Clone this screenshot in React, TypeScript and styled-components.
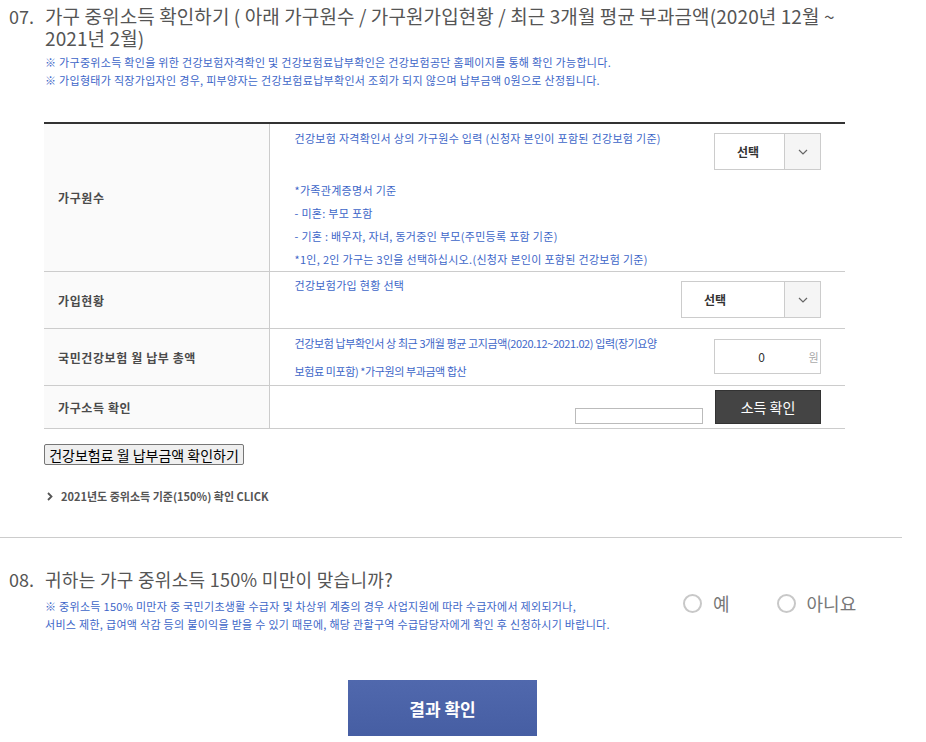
import React, { FC } from "react";
import styled, { createGlobalStyle } from "styled-components";

const GlobalStyle = createGlobalStyle`
  html, body {
    margin: 0;
    padding: 0;
    background: #fff;
  }
  body {
    font-family: "Noto Sans CJK KR", "Noto Sans", sans-serif;
    color: #555;
  }
  * {
    box-sizing: border-box;
  }
`;

const BLUE = "#3d66c8";

const Page = styled.div`
  width: 902px;
  padding-top: 5px;
`;

const Section = styled.section`
  padding-left: 9px;
`;

const Heading = styled.h2<{ $size: number; $spacing: number }>`
  display: grid;
  grid-template-columns: 36px 1fr;
  margin: 0;
  width: 830px;
  font-size: ${({ $size }) => $size}px;
  font-weight: 400;
  line-height: 22px;
  letter-spacing: ${({ $spacing }) => $spacing}px;
  color: #555;
`;

const Num = styled.span`
  font-size: 18px;
  letter-spacing: 0;
`;

const Notes = styled.div<{ $width?: number }>`
  margin: 4px 0 0 36px;
  width: ${({ $width }) => ($width ? `${$width}px` : "auto")};
  font-size: 11px;
  line-height: 18px;
  letter-spacing: 0.3px;
  color: ${BLUE};
`;

const Note = styled.p`
  margin: 0;
  white-space: nowrap;
`;

const Table = styled.table`
  margin: 33px 0 0 35px;
  width: 801px;
  border-collapse: collapse;
  border-top: 2px solid #333;
`;

const Row = styled.tr`
  border-bottom: 1px solid #ccc;
`;

const Label = styled.th<{ $h: number }>`
  width: 225px;
  height: ${({ $h }) => $h}px;
  padding: 0 0 0 14px;
  background: #fafafa;
  border-right: 1px solid #ccc;
  text-align: left;
  vertical-align: middle;
  font-size: 12px;
  font-weight: 700;
  color: #4a4a4a;
  letter-spacing: 0.6px;
`;

const Cell = styled.td`
  padding: 0 24px 0 25px;
  vertical-align: top;
  font-size: 11px;
  color: ${BLUE};
  letter-spacing: 0.3px;
`;

const CellTop = styled.div`
  display: flex;
  justify-content: space-between;
  align-items: flex-start;
`;

const CellText = styled.p<{ $pt?: number; $lh?: number; $ls?: number }>`
  margin: 0;
  padding-top: ${({ $pt = 0 }) => $pt}px;
  line-height: ${({ $lh = 23 }) => $lh}px;
  letter-spacing: ${({ $ls = 0.3 }) => $ls}px;
  white-space: nowrap;
`;

const DetailList = styled.div`
  margin-top: 9px;
  line-height: 23px;
`;

const SelectBox = styled.div<{ $w: number; $mt: number }>`
  display: flex;
  flex-shrink: 0;
  width: ${({ $w }) => $w}px;
  height: 37px;
  margin-top: ${({ $mt }) => $mt}px;
  border: 1px solid #ccc;
  background: #fff;
`;

const SelectValue = styled.span`
  flex: 1;
  padding-left: 22px;
  line-height: 35px;
  font-size: 12px;
  font-weight: 700;
  color: #333;
  letter-spacing: 0;
`;

const SelectArrow = styled.span`
  display: flex;
  align-items: center;
  justify-content: center;
  width: 36px;
  background: #f5f5f5;
  border-left: 1px solid #ccc;
`;

const AmountBox = styled.div`
  display: flex;
  flex-shrink: 0;
  width: 107px;
  height: 35px;
  margin-top: 10px;
  border: 1px solid #ccc;
  align-items: center;
`;

const AmountValue = styled.span`
  flex: 1;
  text-align: center;
  font-size: 12px;
  color: #333;
`;

const Unit = styled.span`
  padding-right: 1px;
  font-size: 11px;
  color: #aaa;
`;

const ConfirmCell = styled.div`
  display: flex;
  justify-content: flex-end;
  align-items: flex-end;
  gap: 12px;
  padding: 4px 0 4px;
`;

const SmallInput = styled.div`
  width: 128px;
  height: 16px;
  border: 1px solid #bbb;
`;

const DarkButton = styled.button`
  width: 106px;
  height: 34px;
  padding: 0;
  border: 1px solid #333;
  background: #444;
  color: #fff;
  font-family: inherit;
  font-size: 14px;
  letter-spacing: 0;
`;

const PlainButton = styled.button`
  display: block;
  margin: 15px 0 0 35px;
  width: 200px;
  height: 21px;
  padding: 0;
  border: 1px solid #767676;
  border-radius: 2px;
  background: #efefef;
  font-family: inherit;
  font-size: 14px;
  line-height: 18px;
  color: #000;
  letter-spacing: 0;
`;

const ClickLink = styled.a`
  display: flex;
  align-items: center;
  gap: 8px;
  margin: 22px 0 0 38px;
  line-height: 18px;
  font-size: 11px;
  font-weight: 700;
  color: #555;
  text-decoration: none;
  letter-spacing: 0;
`;

const Separator = styled.hr`
  margin: 32px 0 0;
  border: 0;
  border-top: 1px solid #ccc;
`;

const Section08 = styled(Section)`
  padding-top: 30px;
`;

const AnswerRow = styled.div`
  display: flex;
  align-items: flex-start;
  margin-top: 3px;
`;

const RadioGroup = styled.div`
  display: flex;
  gap: 47px;
  margin-top: -1px;
`;

const Radio = styled.label`
  display: flex;
  align-items: center;
  gap: 11px;
  font-size: 18px;
  line-height: 22px;
  color: #777;
`;

const Circle = styled.span`
  width: 19px;
  height: 19px;
  border: 2px solid #c8c8c8;
  border-radius: 50%;
`;

const ResultButton = styled.button`
  display: block;
  margin: 47px 0 0 339px;
  width: 189px;
  height: 56px;
  border: 0;
  background: linear-gradient(#5068ad, #465ea3);
  color: #fff;
  font-family: inherit;
  font-size: 17px;
  font-weight: 700;
`;

const Chevron: FC = () => (
  <svg width="10" height="6" viewBox="0 0 10 6">
    <path d="M1 1l4 4 4-4" fill="none" stroke="#666" strokeWidth="1.2" />
  </svg>
);

const Arrow: FC = () => (
  <svg width="6" height="9" viewBox="0 0 6 9">
    <path d="M1 1l3.5 3.5L1 8" fill="none" stroke="#555" strokeWidth="1.8" />
  </svg>
);

const Select: FC<{ width: number; mt: number }> = ({ width, mt }) => (
  <SelectBox $w={width} $mt={mt}>
    <SelectValue>선택</SelectValue>
    <SelectArrow>
      <Chevron />
    </SelectArrow>
  </SelectBox>
);

const App: FC = () => (
  <Page>
    <GlobalStyle />
    <Section>
      <Heading $size={19} $spacing={0.1}>
        <Num>07.</Num>
        <span>
          가구 중위소득 확인하기 ( 아래 가구원수 / 가구원가입현황 / 최근 3개월 평균 부과금액(2020년 12월 ~ 2021년 2월)
        </span>
      </Heading>
      <Notes>
        <Note>※ 가구중위소득 확인을 위한 건강보험자격확인 및 건강보험료납부확인은 건강보험공단 홈페이지를 통해 확인 가능합니다.</Note>
        <Note>※ 가입형태가 직장가입자인 경우, 피부양자는 건강보험료납부확인서 조회가 되지 않으며 납부금액 0원으로 산정됩니다.</Note>
      </Notes>

      <Table>
        <tbody>
          <Row>
            <Label $h={148}>가구원수</Label>
            <Cell>
              <CellTop>
                <CellText $pt={3}>건강보험 자격확인서 상의 가구원수 입력 (신청자 본인이 포함된 건강보험 기준)</CellText>
                <Select width={107} mt={9} />
              </CellTop>
              <DetailList>
                <div>*가족관계증명서 기준</div>
                <div>- 미혼: 부모 포함</div>
                <div>- 기혼 : 배우자, 자녀, 동거중인 부모(주민등록 포함 기준)</div>
                <div>*1인, 2인 가구는 3인을 선택하십시오.(신청자 본인이 포함된 건강보험 기준)</div>
              </DetailList>
            </Cell>
          </Row>
          <Row>
            <Label $h={57}>가입현황</Label>
            <Cell>
              <CellTop>
                <CellText $pt={2}>건강보험가입 현황 선택</CellText>
                <Select width={140} mt={9} />
              </CellTop>
            </Cell>
          </Row>
          <Row>
            <Label $h={56}>국민건강보험 월 납부 총액</Label>
            <Cell>
              <CellTop>
                <CellText $lh={28} $ls={-0.4}>
                  건강보험 납부확인서 상 최근 3개월 평균 고지금액(2020.12~2021.02) 입력(장기요양
                  <br />
                  보험료 미포함) *가구원의 부과금액 합산
                </CellText>
                <AmountBox>
                  <AmountValue>0</AmountValue>
                  <Unit>원</Unit>
                </AmountBox>
              </CellTop>
            </Cell>
          </Row>
          <Row>
            <Label $h={42}>가구소득 확인</Label>
            <Cell>
              <ConfirmCell>
                <SmallInput />
                <DarkButton>소득 확인</DarkButton>
              </ConfirmCell>
            </Cell>
          </Row>
        </tbody>
      </Table>

      <PlainButton>건강보험료 월 납부금액 확인하기</PlainButton>
      <ClickLink href="#">
        <Arrow />
        2021년도 중위소득 기준(150%) 확인 CLICK
      </ClickLink>
    </Section>

    <Separator />

    <Section08>
      <Heading $size={18} $spacing={0.3}>
        <Num>08.</Num>
        <span>귀하는 가구 중위소득 150% 미만이 맞습니까?</span>
      </Heading>
      <AnswerRow>
        <Notes $width={638}>
          <Note>※ 중위소득 150% 미만자 중 국민기초생활 수급자 및 차상위 계층의 경우 사업지원에 따라 수급자에서 제외되거나,</Note>
          <Note>서비스 제한, 급여액 삭감 등의 불이익을 받을 수 있기 때문에, 해당 관할구역 수급담당자에게 확인 후 신청하시기 바랍니다.</Note>
        </Notes>
        <RadioGroup>
          <Radio>
            <Circle />예
          </Radio>
          <Radio>
            <Circle />아니요
          </Radio>
        </RadioGroup>
      </AnswerRow>
      <ResultButton>결과 확인</ResultButton>
    </Section08>
  </Page>
);

export default App;
